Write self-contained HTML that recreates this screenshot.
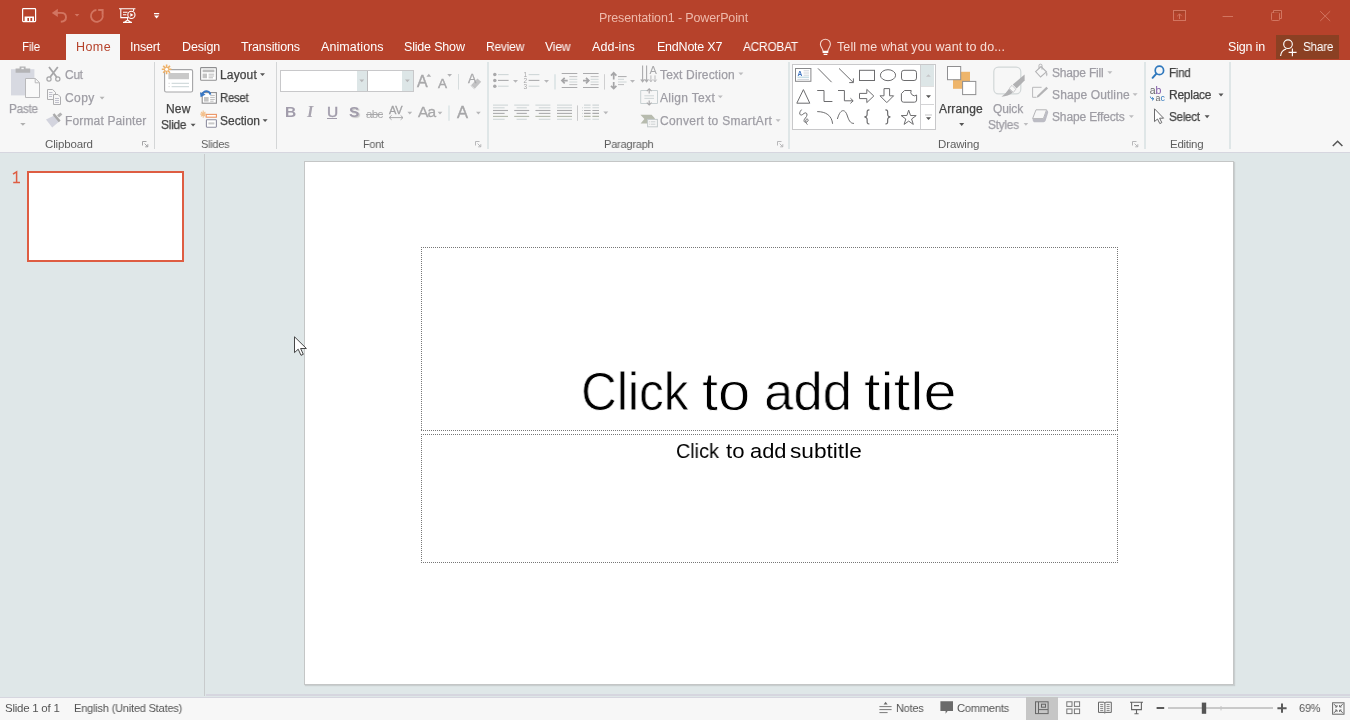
<!DOCTYPE html>
<html>
<head>
<meta charset="utf-8">
<title>Presentation1 - PowerPoint</title>
<style>
html,body{margin:0;padding:0;}
body{width:1350px;height:720px;overflow:hidden;position:relative;background:#dfe7e8;font-family:"Liberation Sans",sans-serif;font-size:12.5px;color:#444;}
.a{position:absolute;}
.t{position:absolute;white-space:nowrap;line-height:16px;height:16px;will-change:transform;}
svg{position:absolute;overflow:visible;will-change:transform;}
#titlebar{left:0;top:0;width:1350px;height:60px;background:#b6422b;}
#ribbon{left:0;top:60px;width:1350px;height:92px;background:#f7f7f7;}
#ribline{left:0;top:152px;width:1350px;height:1px;background:#d6d6df;}
#work{left:0;top:153px;width:1350px;height:544px;background:#dfe7e8;}
#status{left:0;top:697px;width:1350px;height:23px;background:#f7f7f7;border-top:1px solid #d6d6df;box-sizing:border-box;}
.tab{color:#fff;font-size:13px;top:39px;}
.gl{color:#555;font-size:11.5px;top:136px;}
.dis{color:#9a9a9a;}
.en{color:#3b3b3b;}
.sep{position:absolute;top:62px;width:1px;height:87px;background:#dadfe0;}
.ph{background:
 repeating-linear-gradient(90deg,#777 0 1px,transparent 1px 2px) 0 0/100% 1px no-repeat,
 repeating-linear-gradient(90deg,#777 0 1px,transparent 1px 2px) 0 100%/100% 1px no-repeat,
 repeating-linear-gradient(180deg,#777 0 1px,transparent 1px 2px) 0 0/1px 100% no-repeat,
 repeating-linear-gradient(180deg,#777 0 1px,transparent 1px 2px) 100% 0/1px 100% no-repeat;}
</style>
</head>
<body>
<!-- TITLE BAR -->
<div id="titlebar" class="a"></div>
<div class="a" style="left:66px;top:34px;width:54px;height:26px;background:#f7f7f7;"></div>
<div class="a" style="left:1276px;top:35px;width:63px;height:24px;background:#8b4023;"></div>
<!-- QAT + window controls -->
<svg style="left:0;top:0;" width="1350" height="60" viewBox="0 0 1350 60">
 <!-- save -->
 <g fill="none" stroke="#fff" stroke-width="1.2">
  <rect x="22.6" y="8.6" width="13" height="13" rx="0.8"/>
 </g>
 <path d="M24.6 16.6 H34 V21.4 H24.6 Z M27.4 18 V21.2 H29 V18 Z M30.4 18 V21.2 H32.2 V18 Z" fill="#fff" fill-rule="evenodd"/>
 <path d="M24.6 9 V15" stroke="#fff" stroke-width="0.01"/>
 <!-- undo -->
 <g fill="none" stroke="#d27561" stroke-width="1.9" stroke-linejoin="round">
  <path d="M54.4 12.9 H61 C64.4 12.9 66 15 66 17.2 C66 19.8 63.8 21.6 60.8 21.8"/>
  <!-- redo -->
  <path d="M96.4 10 A5.9 5.9 0 1 0 102.5 14.2" stroke-width="1.8"/>
 </g>
 <path d="M51.8 12.9 L57.8 8.8 V17 Z" fill="#d27561"/>
 <path d="M98.2 9 H103.6 V14.4 H101.6 V11 H98.2 Z" fill="#d27561"/>
 <path d="M74.6 14 H79.4 L77 16.6 Z" fill="#d27561"/>
 <!-- slideshow -->
 <g fill="none" stroke="#fff" stroke-width="1.1">
  <path d="M119 8.8 H135.4 M120.8 9 V17.6 H128.4 M127.6 17.8 V20.4 M124.4 22.3 L127.6 20 L130.8 22.3 M123 22.4 H132 M123 12.3 H127.6 M123 14.8 H126.4 M133.6 9 V11"/>
  <circle cx="131.4" cy="14.9" r="3.6" fill="#b6422b"/>
 </g>
 <path d="M130.3 13 L133.4 14.9 L130.3 16.8 Z" fill="#fff"/>
 <!-- customize -->
 <path d="M154 13 H159.2 V14.2 H154 Z M154 15.6 H159.2 L156.6 18.6 Z" fill="#fff"/>
 <!-- ribbon display -->
 <g fill="none" stroke="#d27560" stroke-width="1">
  <rect x="1173.5" y="10.5" width="12" height="10"/>
  <path d="M1179.5 19 V14 M1177.2 16.2 L1179.5 13.9 L1181.8 16.2"/>
  <path d="M1222.6 16.5 H1233"/>
  <rect x="1271.5" y="12.5" width="8" height="8" rx="0.8"/>
  <path d="M1273.5 12.3 V10.5 H1281.5 V18.5 H1279.8"/>
  <path d="M1320.2 11.2 L1330.2 21 M1330.2 11.2 L1320.2 21"/>
 </g>
 <rect x="1174" y="11" width="11" height="2.2" fill="#a84128"/>
 <rect x="1274" y="11" width="7" height="1.6" fill="#a84128"/>
 <!-- lightbulb -->
 <g fill="none" stroke="#f4d3ca" stroke-width="1.1">
  <path d="M823 51.2 C823 48 820.4 47.4 820.4 44.2 A5 5 0 0 1 830.4 44.2 C830.4 47.4 827.9 48 827.9 51.2"/>
 </g>
 <path d="M822.6 50.8 H828.3 V53 H822.6 Z M823.6 53.8 H827.4 V55 H823.6 Z" fill="#fff"/>
 <!-- share person -->
 <g fill="none" stroke="#fff" stroke-width="1.15">
  <circle cx="1288" cy="44.2" r="4.3"/>
  <path d="M1280.6 56 C1280.9 51.8 1283.6 49.8 1286.2 49"/>
  <path d="M1292.4 48.6 V56.2 M1288.6 52.4 H1296.6"/>
 </g>
</svg>
<!-- RIBBON -->
<div id="ribbon" class="a"></div>
<div id="ribline" class="a"></div>
<!-- RIBBON ICONS: clipboard + slides -->
<div class="sep" style="left:154px;background:#d4d6d7;"></div>
<div class="sep" style="left:276px;background:#d4d6d7;"></div>
<div class="sep" style="left:487px;width:2px;background:#dfe6e7;"></div>
<div class="sep" style="left:788px;width:2px;background:#dfe6e7;"></div>
<div class="sep" style="left:1144px;width:2px;background:#dfe6e7;"></div>
<div class="sep" style="left:1229px;width:2px;background:#dfe6e7;"></div>
<svg style="left:0;top:60px;" width="280" height="92" viewBox="0 60 280 92">
 <!-- paste -->
 <rect x="11" y="69.2" width="23.4" height="26.2" fill="#d7d9e1"/>
 <path d="M15.6 68.6 H19.6 V66.4 H25.6 V68.6 H30.2 V72.8 H15.6 Z M21.4 67.8 V69.2 H23.8 V67.8 Z" fill="#b4b4b6" fill-rule="evenodd"/>
 <path d="M25.5 78.5 H35.4 L39.5 82.6 V97.5 H25.5 Z" fill="#f9f9f9" stroke="#b9b9bb" stroke-width="1"/>
 <path d="M35.2 78.6 V82.8 H39.4" fill="none" stroke="#b9b9bb" stroke-width="1"/>
 <path d="M20.2 123 H25.6 L22.9 125.8 Z" fill="#b0b0b0"/>
 <!-- scissors -->
 <g fill="none" stroke="#a6a6a8" stroke-width="1.8">
  <path d="M49 67 L56.6 77 M57.8 67 L50.2 77"/>
  <circle cx="49" cy="79" r="2.1" stroke-width="1.2"/>
  <circle cx="57.8" cy="79" r="2.1" stroke-width="1.2"/>
 </g>
 <!-- copy -->
 <g fill="#f7f7f7" stroke="#aeaeb0" stroke-width="1">
  <path d="M47.5 89.5 H52.6 L55.5 92.4 V99.5 H47.5 Z"/>
  <path d="M53.5 94.5 H58 L60.5 97 V104.5 H53.5 Z"/>
 </g>
 <path d="M49 92.5 H52.5 M49 94.5 H52.5 M49 96.5 H52 M55 98.5 H59 M55 100.5 H59 M55 102.5 H59" stroke="#b9b9c6" stroke-width="0.9" fill="none"/>
 <!-- format painter -->
 <path d="M46 119.6 L54.2 115.4 L59.2 121.6 L52.2 127.6 Z" fill="#d3d4de"/>
 <path d="M52.6 114.8 L54.4 113.2 L60.6 120.6 L58.8 122.2 Z" fill="#aaaaab"/>
 <path d="M57 115.2 L60.4 112.4 L62.4 114.6 L59 117.6 Z" fill="#b2b2b3"/>
 <!-- clipboard launcher -->
 <path d="M142.5 145.5 V141.5 H146.5 M144.6 143.6 L147.6 146.6 M147.8 144.2 V146.8 H145.2" fill="none" stroke="#9a9a9c" stroke-width="0.9"/>
 <!-- copy arrow -->
 <path d="M99.6 96.8 H104.6 L102.1 99.4 Z" fill="#b5b5b5"/>
 <!-- NEW SLIDE -->
 <rect x="164.6" y="69.6" width="28" height="22.4" rx="1.6" fill="#fff" stroke="#a5a5a7" stroke-width="1.1"/>
 <rect x="168.4" y="73" width="20.6" height="6.2" fill="#c9c9c9"/>
 <path d="M171.6 83.3 H189 M171.6 86.6 H189" stroke="#d3dcdd" stroke-width="1.3"/>
 <path d="M168.6 83.3 H169.6 M168.6 86.6 H169.6" stroke="#c9c9c9" stroke-width="1"/>
 <g stroke="#eeb169" stroke-width="1.6" fill="none">
  <path d="M166.6 64.4 V74.2 M161.8 69.3 H171.4 M163.2 65.9 L170 72.7 M170 65.9 L163.2 72.7"/>
 </g>
 <circle cx="166.6" cy="69.3" r="1.5" fill="#fff"/>
 <path d="M190.6 123.8 H195.6 L193.1 126.6 Z" fill="#555"/>
 <!-- layout -->
 <rect x="200.6" y="67.6" width="15.8" height="12.6" rx="0.8" fill="#fff" stroke="#8e8e90" stroke-width="1.1"/>
 <rect x="202.6" y="69.6" width="11.8" height="2.6" fill="#bdbdbd"/>
 <rect x="202.6" y="73.6" width="4.4" height="4.6" fill="#c4c4c4"/>
 <path d="M208.6 74.2 H214.2 M208.6 76 H214.2 M208.6 77.8 H213" stroke="#b4b4b4" stroke-width="0.9"/>
 <path d="M260 73.2 H265 L262.5 76 Z" fill="#555"/>
 <!-- reset -->
 <rect x="202.2" y="92.6" width="14.2" height="10.6" fill="#fff" stroke="#8e8e90" stroke-width="1.1"/>
 <rect x="204" y="97" width="4.6" height="4.6" fill="#c4c4c4"/>
 <path d="M210.2 95.4 H214.8 M210.2 97.4 H214.8 M210.2 99.4 H214.8 M210.2 101.2 H213.6" stroke="#b4b4b4" stroke-width="0.9"/>
 <path d="M210.4 94.6 C209.6 90.4 204.2 89.6 202.4 94.2" fill="none" stroke="#3a78c4" stroke-width="1.9"/>
 <path d="M200 92.2 L205.6 94.6 L200.6 97.2 Z" fill="#3a78c4"/>
 <!-- section -->
 <rect x="206.2" y="114.4" width="10.2" height="2.8" fill="#fff" stroke="#ec9463" stroke-width="1.1"/>
 <rect x="206.4" y="119.8" width="10" height="7.4" rx="0.6" fill="#fff" stroke="#8e8ea0" stroke-width="1.1"/>
 <rect x="208.4" y="122.4" width="6" height="2" fill="#c9c9c9"/>
 <g stroke="#f3c08c" stroke-width="1.1"><path d="M203.2 110.4 V117.8 M200.2 114.1 H206.2 M201 111.9 L205.4 116.3 M205.4 111.9 L201 116.3"/></g>
 <path d="M262.6 119.2 H267.6 L265.1 122 Z" fill="#555"/>
</svg>
<!-- FONT GROUP -->
<div class="a" style="left:280px;top:70px;width:132px;height:20px;border:1px solid #c8c8ca;background:#fff;"></div>
<div class="a" style="left:357px;top:71px;width:10px;height:20px;background:#dde6e7;"></div>
<div class="a" style="left:367px;top:71px;width:1px;height:20px;background:#bcbcbe;"></div>
<div class="a" style="left:402px;top:71px;width:11px;height:20px;background:#dde6e7;"></div>
<svg style="left:276px;top:60px;" width="214" height="92" viewBox="276 60 214 92">
 <path d="M359.4 79.6 H364.2 L361.8 82.2 Z M405 79.6 H409.8 L407.4 82.2 Z" fill="#b7b7b9"/>
 <!-- grow / shrink tri -->
 <path d="M426.4 76.8 L428.8 73.8 L431.2 76.8 Z M447.2 74 H452 L449.6 76.8 Z" fill="#b2b2b4"/>
 <path d="M458.5 74 V89.6" stroke="#d6dcdd" stroke-width="1"/>
 <!-- eraser -->
 <path d="M471 85.2 L477.4 78.4 L481.2 81.8 L474.8 88.8 Z" fill="#c3c3c4"/>
 <path d="M470.6 85.6 L474.4 89.2" stroke="#dcdcdc" stroke-width="1"/>
 <!-- AV arrow -->
 <path d="M389.2 117.6 H403 M391.6 115.4 L389.2 117.6 L391.6 119.8 M400.6 115.4 L403 117.6 L400.6 119.8" fill="none" stroke="#a9a9ab" stroke-width="1"/>
 <path d="M407.4 111.8 H412.2 L409.8 114.6 Z M437.6 111.8 H442.4 L440 114.6 Z M476 111.8 H480.8 L478.4 114.6 Z" fill="#b7b7b9"/>
 <path d="M449 105.4 V120.8" stroke="#dde5e6" stroke-width="1.6"/>
 <!-- launcher -->
 <path d="M475.5 145.5 V141.5 H479.5 M477.6 143.6 L480.6 146.6 M480.8 144.2 V146.8 H478.2" fill="none" stroke="#b0b0b2" stroke-width="0.9"/>
</svg>
<div class="t" style="left:284.8px;top:102px;height:20px;line-height:20px;font-size:15.5px;font-weight:bold;color:#a19cab;">B</div>
<div class="t" style="left:307.4px;top:101.6px;height:20px;line-height:20px;font-size:16.5px;font-family:'Liberation Serif',serif;font-style:italic;font-weight:bold;color:#a9a5b0;">I</div>
<div class="t" style="left:326.6px;top:102px;height:20px;line-height:20px;font-size:15.5px;color:#a19cab;-webkit-text-stroke:0.5px #a19cab;">U</div>
<div class="a" style="left:327px;top:118px;width:10px;height:1px;background:#a19cab;"></div>
<div class="t" style="left:348.6px;top:102px;height:20px;line-height:20px;font-size:15.5px;font-weight:bold;color:#a19cab;text-shadow:1.2px 1.2px 1px #c9c9c9;">S</div>
<div class="t" style="left:365.6px;top:104px;height:20px;line-height:20px;font-size:11.5px;color:#a8a8aa;letter-spacing:-0.6px;">abc</div>
<div class="a" style="left:366px;top:114px;width:17px;height:1px;background:#a8a8aa;"></div>
<div class="t" style="left:388.6px;top:100.2px;height:20px;line-height:20px;font-size:11px;color:#a2a2a4;letter-spacing:-0.3px;-webkit-text-stroke:0.3px #a2a2a4;">AV</div>
<div class="t" style="left:417.6px;top:102.2px;height:20px;line-height:20px;font-size:15.5px;color:#a8a8aa;letter-spacing:-0.9px;-webkit-text-stroke:0.3px #a8a8aa;">Aa</div>
<div class="t" style="left:457.2px;top:102.2px;height:20px;line-height:20px;font-size:16.5px;color:#a6a6a8;-webkit-text-stroke:0.4px #a6a6a8;">A</div>
<div class="t" style="left:416.8px;top:72.4px;height:20px;line-height:20px;font-size:16px;color:#a8a8aa;-webkit-text-stroke:0.4px #a8a8aa;">A</div>
<div class="t" style="left:438.2px;top:73.8px;height:20px;line-height:20px;font-size:13.5px;color:#a8a8aa;-webkit-text-stroke:0.4px #a8a8aa;">A</div>
<div class="t" style="left:467.6px;top:69px;height:20px;line-height:20px;font-size:12.5px;color:#a8a8aa;-webkit-text-stroke:0.3px #a8a8aa;">A</div>
<!-- PARAGRAPH GROUP -->
<svg style="left:486px;top:60px;" width="304" height="92" viewBox="486 60 304 92">
<circle cx="494.8" cy="74.6" r="1.75" fill="#a9a9ab"/>
<path d="M498 74.6 H508.6" stroke="#cfd6d7" stroke-width="1.1"/>
<circle cx="494.8" cy="80.4" r="1.75" fill="#a9a9ab"/>
<path d="M498 80.4 H508.6" stroke="#ababad" stroke-width="1.1"/>
<circle cx="494.8" cy="86.2" r="1.75" fill="#a9a9ab"/>
<path d="M498 86.2 H508.6" stroke="#cfd6d7" stroke-width="1.1"/>
<text x="523.4" y="76.89999999999999" font-family="Liberation Sans" font-size="6.5" fill="#a4a4a6">1</text>
<path d="M528.6 74.6 H539.4" stroke="#cfd6d7" stroke-width="1.1"/>
<text x="523.4" y="82.7" font-family="Liberation Sans" font-size="6.5" fill="#a4a4a6">2</text>
<path d="M528.6 80.4 H539.4" stroke="#ababad" stroke-width="1.1"/>
<text x="523.4" y="88.5" font-family="Liberation Sans" font-size="6.5" fill="#a4a4a6">3</text>
<path d="M528.6 86.2 H539.4" stroke="#cfd6d7" stroke-width="1.1"/>
<path d="M513 80 H518 L515.5 82.7 Z" fill="#b7b7b9"/>
<path d="M544 80 H549 L546.5 82.7 Z" fill="#b7b7b9"/>
<path d="M630 80 H635 L632.5 82.7 Z" fill="#b7b7b9"/>
<path d="M603.3 111.6 H608.3 L605.8 114.3 Z" fill="#b7b7b9"/>
<path d="M738.4 72.6 H743.4 L740.9 75.3 Z" fill="#bdbdbf"/>
<path d="M717.8 95.6 H722.8 L720.3 98.3 Z" fill="#bdbdbf"/>
<path d="M775.6 119.2 H780.6 L778.1 121.9 Z" fill="#bdbdbf"/>
<path d="M555 74.2 V89.6" stroke="#dde5e6" stroke-width="1.8"/>
<path d="M604.5 74.2 V89.6" stroke="#cfcfd0" stroke-width="1"/>
<path d="M577.5 105.4 V120.8" stroke="#c9c9ca" stroke-width="1"/>
<path d="M561.7 73.5 H577.3000000000001 M561.7 87.5 H577.3000000000001" stroke="#ababad" stroke-width="1.1"/><path d="M569.3000000000001 76.6 H577.3000000000001" stroke="#c0c0c2" stroke-width="1"/><path d="M569.3000000000001 79.3 H577.3000000000001" stroke="#cfd6d7" stroke-width="1"/><path d="M569.3000000000001 82 H577.3000000000001" stroke="#cfd6d7" stroke-width="1"/><path d="M569.3000000000001 84.6 H577.3000000000001" stroke="#c0c0c2" stroke-width="1"/><path d="M562.1 80.6 H567.7 M564.7 77.8 L561.9000000000001 80.6 L564.7 83.4" fill="none" stroke="#a6a6a8" stroke-width="1.7"/>
<path d="M583 73.5 H598.6 M583 87.5 H598.6" stroke="#ababad" stroke-width="1.1"/><path d="M590.6 76.6 H598.6" stroke="#c0c0c2" stroke-width="1"/><path d="M590.6 79.3 H598.6" stroke="#cfd6d7" stroke-width="1"/><path d="M590.6 82 H598.6" stroke="#cfd6d7" stroke-width="1"/><path d="M590.6 84.6 H598.6" stroke="#c0c0c2" stroke-width="1"/><path d="M583 80.6 H588.6 M586 77.8 L588.8 80.6 L586 83.4" fill="none" stroke="#a6a6a8" stroke-width="1.7"/>
<path d="M613.7 72.8 V79.4 M613.7 82 V88.6 M611 75.6 L613.7 72.8 L616.4 75.6 M611 85.8 L613.7 88.6 L616.4 85.8" fill="none" stroke="#a6a6a8" stroke-width="1.7"/>
<path d="M618 76.6 H626.6" stroke="#ababad" stroke-width="1"/>
<path d="M618 79.3 H624" stroke="#cfd6d7" stroke-width="1"/>
<path d="M618 82 H626.6" stroke="#cfd6d7" stroke-width="1"/>
<path d="M618 84.6 H624" stroke="#bcbcbe" stroke-width="1"/>
<path d="M493.0 105.1 H508.0" stroke="#cfd6d7" stroke-width="1.1"/><path d="M493.0 107.8 H504.6" stroke="#cfd6d7" stroke-width="1.1"/><path d="M493.0 110.5 H508.0" stroke="#ababad" stroke-width="1.1"/><path d="M493.0 113.4 H504.6" stroke="#ababad" stroke-width="1.1"/><path d="M493.0 116.4 H508.0" stroke="#b4b9ab" stroke-width="1.1"/><path d="M493.0 119.3 H504.6" stroke="#cfd6d7" stroke-width="1.1"/>
<path d="M514.2 105.1 H529.2" stroke="#cfd6d7" stroke-width="1.1"/><path d="M516.6 107.8 H526.8" stroke="#cfd6d7" stroke-width="1.1"/><path d="M514.2 110.5 H529.2" stroke="#ababad" stroke-width="1.1"/><path d="M516.6 113.4 H526.8" stroke="#ababad" stroke-width="1.1"/><path d="M514.2 116.4 H529.2" stroke="#b4b9ab" stroke-width="1.1"/><path d="M516.6 119.3 H526.8" stroke="#cfd6d7" stroke-width="1.1"/>
<path d="M535.4 105.1 H550.4" stroke="#cfd6d7" stroke-width="1.1"/><path d="M538.8 107.8 H550.4" stroke="#cfd6d7" stroke-width="1.1"/><path d="M535.4 110.5 H550.4" stroke="#ababad" stroke-width="1.1"/><path d="M538.8 113.4 H550.4" stroke="#ababad" stroke-width="1.1"/><path d="M535.4 116.4 H550.4" stroke="#b4b9ab" stroke-width="1.1"/><path d="M538.8 119.3 H550.4" stroke="#cfd6d7" stroke-width="1.1"/>
<path d="M557.0 105.1 H572.0" stroke="#cfd6d7" stroke-width="1.1"/><path d="M557.0 107.8 H572.0" stroke="#cfd6d7" stroke-width="1.1"/><path d="M557.0 110.5 H572.0" stroke="#ababad" stroke-width="1.1"/><path d="M557.0 113.4 H572.0" stroke="#ababad" stroke-width="1.1"/><path d="M557.0 116.4 H572.0" stroke="#b4b9ab" stroke-width="1.1"/><path d="M557.0 119.3 H572.0" stroke="#cfd6d7" stroke-width="1.1"/>
<path d="M584 105.1 H590.6 M592.4 105.1 H599" stroke="#cfd6d7" stroke-width="1.1"/>
<path d="M584 107.8 H590.6 M592.4 107.8 H599" stroke="#cfd6d7" stroke-width="1.1"/>
<path d="M582 107.8 H583" stroke="#cfd6d7" stroke-width="1"/>
<path d="M584 110.5 H590.6 M592.4 110.5 H599" stroke="#ababad" stroke-width="1.1"/>
<path d="M582 110.5 H583" stroke="#cfd6d7" stroke-width="1"/>
<path d="M584 113.4 H590.6 M592.4 113.4 H599" stroke="#ababad" stroke-width="1.1"/>
<path d="M582 113.4 H583" stroke="#cfd6d7" stroke-width="1"/>
<path d="M584 116.4 H590.6 M592.4 116.4 H599" stroke="#b4b9ab" stroke-width="1.1"/>
<path d="M582 116.4 H583" stroke="#cfd6d7" stroke-width="1"/>
<path d="M584 119.3 H590.6 M592.4 119.3 H599" stroke="#cfd6d7" stroke-width="1.1"/>
<path d="M642.6 65.4 V81.6 M646.6 65.4 V81.6 M640.8 79.4 L642.6 81.8 L644.4 79.4 M644.8 79.4 L646.6 81.8 L648.4 79.4" fill="none" stroke="#ababad" stroke-width="1.1"/>
<path d="M650.9 75.4 V81.6 M655 75.4 V81.6 M649.3 79.6 L650.9 81.8 L652.5 79.6 M653.4 79.6 L655 81.8 L656.6 79.6" fill="none" stroke="#b3b3b5" stroke-width="0.9"/>
<text x="649.4" y="73.8" font-family="Liberation Sans" font-size="11" fill="#a8a8aa">A</text>
<path d="M647 90.5 H640.7 V103.5 H647 M651.4 90.5 H657.5 V103.5 H651.4" fill="none" stroke="#c8d0d2" stroke-width="1"/>
<path d="M649.2 88.8 V93.4 M646.8 91.2 L649.2 88.8 L651.6 91.2 M649.2 100.4 V105 M646.8 102.6 L649.2 105 L651.6 102.6" fill="none" stroke="#ababad" stroke-width="1.2"/>
<path d="M644.4 95.8 H654 M644.4 98.4 H654" stroke="#cfd6d7" stroke-width="1"/>
<path d="M640.4 114.8 H651.6 L655 118.6 L653 121.2 H648 V123.4 H640.6 L644.4 119 Z" fill="#b7bbae"/>
<rect x="647.6" y="119.4" width="9.8" height="7.4" fill="#f7f7f7" stroke="#c3c9ca" stroke-width="1"/>
<path d="M651 121.8 H655.4 M651 124.2 H655.4" stroke="#c6cccd" stroke-width="0.9"/><path d="M649.4 121.8 H650.2 M649.4 124.2 H650.2" stroke="#b9b9b9" stroke-width="0.9"/>
<path d="M777.5 145.5 V141.5 H781.5 M779.6 143.6 L782.6 146.6 M782.8 144.2 V146.8 H780.2" fill="none" stroke="#b0b0b2" stroke-width="0.9"/>
</svg>
<!-- DRAWING + EDITING -->
<div class="a" style="left:792px;top:64px;width:142px;height:64px;border:1px solid #c8c8ca;background:#fff;"></div>
<div class="a" style="left:921px;top:65px;width:13px;height:21px;background:#dde6e7;"></div>
<div class="a" style="left:920px;top:65px;width:1px;height:64px;background:#d0d0d2;"></div>
<div class="a" style="left:921px;top:86px;width:13px;height:1px;background:#e1e1e1;"></div>
<div class="a" style="left:921px;top:104px;width:13px;height:1px;background:#d4d4d6;"></div>
<svg style="left:788px;top:60px;" width="562" height="92" viewBox="788 60 562 92">
<g fill="none" stroke="#6c6c6e" stroke-width="1" stroke-linejoin="miter">
<rect x="795.5" y="68.5" width="15.4" height="12.8" stroke="#88888a"/>
<path d="M818 68.4 L831.6 82.2"/>
<path d="M839 68.4 L853.2 82.4 M853.4 78.4 V82.6 H849.2"/>
<rect x="859.5" y="70.3" width="15" height="10.2"/>
<ellipse cx="888" cy="75.2" rx="7.6" ry="5.5"/>
<rect x="901.5" y="70.3" width="15" height="10.2" rx="2.4"/>
<path d="M803.4 89.6 L809.8 103.2 H796.8 Z"/>
<path d="M817.2 90.5 H824 V101.5 H832.4"/>
<path d="M838 90.5 H844.4 V100.8 H853 M850.4 98.2 L853.2 100.8 L850.4 103.4"/>
<path d="M859.5 93.4 H866.8 V89.4 L873.8 96 L866.8 102.6 V98.6 H859.5 Z"/>
<path d="M884 88.6 H889.6 V95.8 H893.6 L886.8 102.6 L880 95.8 H884 Z"/>
<path d="M904.6 90.5 H911.2 A3.6 3.6 0 0 0 916.6 95 V100 Q916.6 102.2 914.4 102.2 H903.6 Q901.4 102.2 901.4 100 V93.6 Z"/>
<path d="M801.6 109.6 C797.8 113.6 800.4 116.6 803 114.2 C806.6 110.8 808.6 114.6 805.4 118 C802.4 121 804.8 123.8 807.6 121.4 C809.4 119.6 806.6 117.8 805.8 120.2 C805.4 121.8 806.4 123.6 807.4 124.6"/>
<path d="M817.2 111.6 C826 111.6 831.8 115.6 832.6 123.8"/>
<path d="M837.4 119 C840.4 108.2 845.2 108.6 847.4 116 C849.4 122.4 851.4 123.4 854 123.4"/>
<path d="M869.4 109.8 C866 109.8 867.6 113 867 115.2 C866.6 116.4 865.6 116.8 864.4 116.9 C865.6 117 866.6 117.4 867 118.6 C867.6 120.8 866 124 869.4 124" stroke-width="1.2"/>
<path d="M885.4 109.8 C888.8 109.8 887.2 113 887.8 115.2 C888.2 116.4 889.2 116.8 890.4 116.9 C889.2 117 888.2 117.4 887.8 118.6 C887.2 120.8 888.8 124 885.4 124" stroke-width="1.2"/>
<path d="M908.7 110.1 L910.5 115.5 L916.2 115.6 L911.6 119.0 L913.3 124.4 L908.7 121.1 L904.1 124.4 L905.8 119.0 L901.2 115.6 L906.9 115.5 Z"/>
</g>
<text x="797.6" y="75.6" font-family="Liberation Sans" font-size="6.6" font-weight="bold" fill="#3f74c0">A</text>
<path d="M803.6 70.8 H809 M803.6 73 H809 M803.6 75.2 H809 M797.4 79.4 H809" stroke="#c9cfd6" stroke-width="0.9"/><path d="M797.4 77.2 H809" stroke="#bcd6e0" stroke-width="1.2"/>
<path d="M926 76.8 L928.4 74.2 L930.8 76.8 Z" fill="#c6c6c8"/>
<path d="M926 95.2 H931 L928.5 98 Z" fill="#555"/>
<path d="M925 115 H932" stroke="#c9c9cb" stroke-width="1.1"/><path d="M926 117.3 H931 L928.5 120.1 Z" fill="#555"/>
<rect x="953" y="71.8" width="17" height="17" fill="#eeb56b"/>
<rect x="947.5" y="66.5" width="13.2" height="13.2" fill="#fff" stroke="#8f8f91" stroke-width="1"/>
<rect x="962.6" y="81.4" width="13.2" height="13.2" fill="#fff" stroke="#8f8f91" stroke-width="1"/>
<path d="M959.2 123 H964.2 L961.7 125.9 Z" fill="#555"/>
<rect x="993.8" y="67.2" width="27" height="26.6" rx="4.6" fill="#f7f7f7" stroke="#d2d7d8" stroke-width="1.2"/>
<path d="M1024.6 74.6 V80.6 L1016.6 88.4 L1012.8 84.6 Z" fill="#b1b1b3"/>
<path d="M1012 85.4 L1015.8 89.2 L1013.4 92.4 L1009.2 88.2 Z" fill="#f7f7f7" stroke="#c4c4c6" stroke-width="0.9"/>
<path d="M1009 88.8 L1012.8 92.6 C1010 95.4 1006 96.6 1001.4 96.8 C1004.6 94.6 1006.6 92 1009 88.8 Z" fill="#b1b1b3"/>
<path d="M1023.6 123 H1028.2 L1025.9 125.8 Z" fill="#bdbdbf"/>
<path d="M1035.6 71.6 L1041 66.6 L1046.4 71.8 L1040.6 77 Z" fill="none" stroke="#b3b3b5" stroke-width="1.1"/>
<path d="M1039 68.6 V65.4 Q1039 64.2 1040.2 64.2 H1040.8 Q1042 64.2 1042 65.4 V69.6" fill="none" stroke="#b3b3b5" stroke-width="1"/>
<path d="M1046.4 71.4 C1047.8 72.8 1047.8 75 1046.8 76.4 C1045.6 75 1045.4 73 1046.4 71.4 Z" fill="#bdbdbf"/>
<path d="M1041.6 87.3 H1032.6 V97.3 H1036.4" fill="none" stroke="#b9b9bb" stroke-width="1"/>
<path d="M1046.4 86.8 L1048 88.4 L1038.8 97 L1036.6 97.8 L1037.4 95.6 Z" fill="#b3b3b5"/>
<path d="M1036 109.8 H1046.6 L1043.4 118.6 H1032.6 Z" fill="#f7f7f7" stroke="#b5b5b7" stroke-width="1"/>
<path d="M1046.8 110 Q1048.4 110.6 1048.2 112.6 L1045.6 120.8 Q1045 122.2 1043.6 122.2 H1034 Q1032.4 121.4 1032.6 118.8 H1043.4 Z" fill="#bcbcc4"/>
<path d="M1107.4 71.2 H1112.4 L1109.9 74.0 Z" fill="#bdbdbf"/>
<path d="M1132.6 93.2 H1137.6 L1135.1 96.0 Z" fill="#bdbdbf"/>
<path d="M1128.9 115.2 H1133.9 L1131.4 118.0 Z" fill="#bdbdbf"/>
<path d="M1132.5 145.5 V141.5 H1136.5 M1134.6 143.6 L1137.6 146.6 M1137.8 144.2 V146.8 H1135.2" fill="none" stroke="#b0b0b2" stroke-width="0.9"/>
<circle cx="1159.4" cy="70.4" r="4.2" fill="none" stroke="#2f78bd" stroke-width="1.7"/>
<path d="M1156.4 73.6 L1152.6 77.8" stroke="#2f78bd" stroke-width="2" stroke-linecap="round"/>
<text x="1149.8" y="94" font-family="Liberation Sans" font-size="10.5" fill="#68686a">a</text>
<text x="1155.6" y="94" font-family="Liberation Sans" font-size="10.5" fill="#7d55a4">b</text>
<text x="1155.6" y="100.8" font-family="Liberation Sans" font-size="8.8" fill="#68686a">a</text>
<text x="1160.6" y="100.8" font-family="Liberation Sans" font-size="8.8" fill="#2f78bd">c</text>
<path d="M1150.4 96.6 C1150.6 98.4 1151.6 98.8 1153.4 98.8 M1152 97.4 L1153.8 98.8 L1152 100.4" fill="none" stroke="#2f78bd" stroke-width="1"/>
<path d="M1154.5 108.8 V121.6 L1157.5 119 L1159.8 123.6 L1161.8 122.6 L1159.6 118.2 H1163.6 Z" fill="#fff" stroke="#6a6a6c" stroke-width="1" stroke-linejoin="round"/>
<path d="M1218.5 93.6 H1223.5 L1221 96.6 Z M1204.6 115.2 H1209.6 L1207.1 118.2 Z" fill="#555"/>
<path d="M1332.8 146 L1337.6 141.2 L1342.4 146" fill="none" stroke="#555" stroke-width="1.5"/>
</svg>

<!-- WORKSPACE -->
<div id="work" class="a"></div>

<div class="a" style="left:204px;top:154px;width:1px;height:542px;background:#c8cbcc;"></div>
<div class="a" style="left:206px;top:694px;width:1144px;height:2px;background:#d6d6df;"></div>
<!-- thumbnail -->
<svg style="left:12.4px;top:171px;" width="9" height="13" viewBox="0 0 9 13"><path d="M1 3.2 L4.6 0.9 V11.2 M1.2 11.4 H8" fill="none" stroke="#de5d42" stroke-width="1.5"/></svg>
<div class="a" style="left:27px;top:171px;width:153px;height:87px;border:2px solid #de5d42;background:#fff;"></div>
<!-- slide -->
<div class="a" style="left:304px;top:161px;width:928px;height:522px;border:1px solid #c4c6c6;background:#fff;box-shadow:1px 1px 1px rgba(120,120,120,.22);"></div>
<div class="a ph" style="left:421px;top:247px;width:697px;height:184px;"></div>
<div class="a ph" style="left:421px;top:434px;width:697px;height:129px;"></div>
<div class="t" style="left:581.1px;top:361px;height:60px;line-height:60px;font-size:54px;color:#000;transform-origin:0 0;-webkit-text-stroke:0.8px #fff;transform:scaleX(0.920);">Click</div>
<div class="t" style="left:701.6px;top:361px;height:60px;line-height:60px;font-size:54px;color:#000;transform-origin:0 0;-webkit-text-stroke:0.8px #fff;transform:scaleX(1.072);">to</div>
<div class="t" style="left:763.6px;top:361px;height:60px;line-height:60px;font-size:54px;color:#000;transform-origin:0 0;-webkit-text-stroke:0.8px #fff;transform:scaleX(0.977);">add</div>
<div class="t" style="left:864.0px;top:361px;height:60px;line-height:60px;font-size:54px;color:#000;transform-origin:0 0;-webkit-text-stroke:0.8px #fff;transform:scaleX(1.101);">title</div>
<div class="t" style="left:676.4px;top:439px;height:24px;line-height:24px;font-size:20.5px;color:#000;transform-origin:0 0;transform:scaleX(0.965);">Click</div>
<div class="t" style="left:726.3px;top:439px;height:24px;line-height:24px;font-size:20.5px;color:#000;transform-origin:0 0;transform:scaleX(1.081);">to</div>
<div class="t" style="left:749.6px;top:439px;height:24px;line-height:24px;font-size:20.5px;color:#000;transform-origin:0 0;transform:scaleX(1.066);">add</div>
<div class="t" style="left:790.4px;top:439px;height:24px;line-height:24px;font-size:20.5px;color:#000;transform-origin:0 0;transform:scaleX(1.105);">subtitle</div>
<!-- cursor -->
<svg style="left:294px;top:336px;" width="14" height="21" viewBox="0 0 14 21"><path d="M0.5 0.8 V16.6 L4.2 13.2 L7 19.3 L9.3 18.3 L6.6 12.5 H12.4 Z" fill="#fff" stroke="#333" stroke-width="0.9" stroke-linejoin="round"/></svg>
<!--WORKCONTENT-->
<!-- STATUS -->
<div id="status" class="a"></div>
<div class="a" style="left:1026px;top:697px;width:32px;height:23px;background:#c6c6c6;"></div>
<svg style="left:870px;top:697px;" width="480" height="23" viewBox="870 697 480 23">
 <!-- notes -->
 <path d="M883.6 704.4 L885.6 701.8 L887.6 704.4 Z" fill="#6a6a6a"/>
 <path d="M879.4 706.6 H891.6 M879.4 709.6 H891.6 M879.4 712.6 H887.6" stroke="#7a7a7a" stroke-width="1"/>
 <!-- comments -->
 <path d="M940.4 701.2 H953 V711 H947.6 L945.6 713.8 V711 H940.4 Z" fill="#6b6b6b"/>
 <!-- normal view -->
 <g fill="none" stroke="#666" stroke-width="1">
  <rect x="1035.5" y="701.8" width="12.6" height="11.8"/>
  <path d="M1038.5 702 V713.4 M1038.6 709.6 H1048"/>
  <rect x="1041.5" y="704.2" width="4" height="3"/>
 </g>
 <!-- sorter -->
 <g fill="none" stroke="#777" stroke-width="1">
  <rect x="1066.8" y="701.8" width="5.2" height="4.6"/><rect x="1074.4" y="701.8" width="5.2" height="4.6"/>
  <rect x="1066.8" y="709" width="5.2" height="4.6"/><rect x="1074.4" y="709" width="5.2" height="4.6"/>
 </g>
 <!-- reading -->
 <g fill="none" stroke="#666" stroke-width="1">
  <path d="M1098.5 702.2 H1104 L1104.9 703 L1105.8 702.2 H1111.3 V712.4 H1105.8 L1104.9 713.2 L1104 712.4 H1098.5 Z M1104.9 703 V713"/>
  <path d="M1100.2 704.6 H1103.2 M1100.2 706.6 H1103.2 M1100.2 708.6 H1103.2 M1100.2 710.6 H1103.2 M1106.6 704.6 H1109.6 M1106.6 706.6 H1109.6 M1106.6 708.6 H1109.6 M1106.6 710.6 H1109.6" stroke-width="0.8"/>
 </g>
 <!-- slideshow -->
 <g fill="none" stroke="#666" stroke-width="1.1">
  <path d="M1130 702.2 H1143 M1131.6 702.4 V709.6 H1141.4 V702.4 M1134 705.6 H1139 M1136.5 709.8 V713.6 M1134.4 713.8 H1138.6"/>
 </g>
 <!-- zoom -->
 <path d="M1156.6 708 H1164.2" stroke="#5a5a5a" stroke-width="2"/>
 <path d="M1168 708 H1273" stroke="#9c9c9c" stroke-width="1"/>
 <path d="M1221 706 V710.4" stroke="#c4c4c4" stroke-width="1"/>
 <rect x="1201.8" y="702.6" width="4.4" height="11.2" fill="#555"/>
 <path d="M1277.4 708.2 H1286.6 M1282 703.6 V712.8" stroke="#5a5a5a" stroke-width="2"/>
 <!-- fit -->
 <rect x="1332.6" y="702.8" width="11.4" height="11.4" fill="none" stroke="#666" stroke-width="1"/>
 <path d="M1334 704.2 L1336.6 706.8 M1342.6 704.2 L1340 706.8 M1334 712.8 L1336.6 710.2 M1342.6 712.8 L1340 710.2" stroke="#555" stroke-width="1"/>
 <path d="M1335 707 H1337 V705 M1341.6 707 H1339.6 V705 M1335 710 H1337 V712 M1341.6 710 H1339.6 V712" fill="none" stroke="#666" stroke-width="0.9"/>
</svg>
<!-- LABELS -->
<div class="t" style="left:599.0px;top:10.1px;font-size:12.5px;color:#eeb9aa;letter-spacing:-0.12px;">Presentation1 - PowerPoint</div>
<div class="t" style="left:22.0px;top:39.4px;font-size:12.5px;color:#fff;letter-spacing:-0.25px;transform:scaleX(0.935);transform-origin:0 0;">File</div>
<div class="t" style="left:75.7px;top:39.4px;font-size:12.5px;color:#b6422b;letter-spacing:0.43px;">Home</div>
<div class="t" style="left:130.0px;top:39.4px;font-size:12.5px;color:#fff;letter-spacing:-0.20px;">Insert</div>
<div class="t" style="left:181.7px;top:39.4px;font-size:12.5px;color:#fff;letter-spacing:-0.14px;">Design</div>
<div class="t" style="left:240.7px;top:39.4px;font-size:12.5px;color:#fff;letter-spacing:-0.17px;">Transitions</div>
<div class="t" style="left:320.7px;top:39.4px;font-size:12.5px;color:#fff;letter-spacing:0.07px;">Animations</div>
<div class="t" style="left:404.3px;top:39.4px;font-size:12.5px;color:#fff;letter-spacing:-0.18px;">Slide Show</div>
<div class="t" style="left:486.0px;top:39.4px;font-size:12.5px;color:#fff;letter-spacing:-0.25px;transform:scaleX(0.964);transform-origin:0 0;">Review</div>
<div class="t" style="left:545.0px;top:39.4px;font-size:12.5px;color:#fff;letter-spacing:-0.25px;transform:scaleX(0.979);transform-origin:0 0;">View</div>
<div class="t" style="left:591.7px;top:39.4px;font-size:12.5px;color:#fff;letter-spacing:0.05px;">Add-ins</div>
<div class="t" style="left:656.7px;top:39.4px;font-size:12.5px;color:#fff;letter-spacing:-0.22px;">EndNote X7</div>
<div class="t" style="left:743.3px;top:39.4px;font-size:12.5px;color:#fff;letter-spacing:-0.25px;transform:scaleX(0.952);transform-origin:0 0;">ACROBAT</div>
<div class="t" style="left:836.7px;top:39.4px;font-size:12.5px;color:#f7ddd6;letter-spacing:0.11px;">Tell me what you want to do...</div>
<div class="t" style="left:1227.6px;top:39.4px;font-size:12.5px;color:#fff;letter-spacing:-0.18px;">Sign in</div>
<div class="t" style="left:1303.0px;top:39.4px;font-size:12.5px;color:#fff;letter-spacing:-0.25px;transform:scaleX(0.938);transform-origin:0 0;">Share</div>
<div class="t" style="left:9.0px;top:100.5px;font-size:12px;color:#9e9da4;letter-spacing:-0.25px;transform:scaleX(0.977);transform-origin:0 0;-webkit-text-stroke:0.25px #9e9da4;">Paste</div>
<div class="t" style="left:65.0px;top:66.8px;font-size:12px;color:#9e9da4;letter-spacing:-0.25px;transform:scaleX(0.989);transform-origin:0 0;-webkit-text-stroke:0.25px #9e9da4;">Cut</div>
<div class="t" style="left:65.0px;top:89.5px;font-size:12px;color:#9e9da4;letter-spacing:0.43px;-webkit-text-stroke:0.25px #9e9da4;">Copy</div>
<div class="t" style="left:65.0px;top:112.8px;font-size:12px;color:#9e9da4;letter-spacing:0.15px;-webkit-text-stroke:0.25px #9e9da4;">Format Painter</div>
<div class="t" style="left:45.0px;top:136.0px;font-size:11.5px;color:#5e5e5e;letter-spacing:-0.16px;">Clipboard</div>
<div class="t" style="left:165.7px;top:100.5px;font-size:12px;color:#444;letter-spacing:0.15px;-webkit-text-stroke:0.25px #444;">New</div>
<div class="t" style="left:161.0px;top:117.1px;font-size:12px;color:#444;letter-spacing:-0.25px;transform:scaleX(0.988);transform-origin:0 0;-webkit-text-stroke:0.25px #444;">Slide</div>
<div class="t" style="left:220.0px;top:66.8px;font-size:12px;color:#444;letter-spacing:0.14px;-webkit-text-stroke:0.25px #444;">Layout</div>
<div class="t" style="left:220.0px;top:89.5px;font-size:12px;color:#444;letter-spacing:-0.25px;transform:scaleX(0.945);transform-origin:0 0;-webkit-text-stroke:0.25px #444;">Reset</div>
<div class="t" style="left:220.0px;top:112.8px;font-size:12px;color:#444;letter-spacing:0.00px;-webkit-text-stroke:0.25px #444;">Section</div>
<div class="t" style="left:201.0px;top:136.0px;font-size:11.5px;color:#5e5e5e;letter-spacing:-0.25px;transform:scaleX(0.951);transform-origin:0 0;">Slides</div>
<div class="t" style="left:363.3px;top:136.0px;font-size:11.5px;color:#5e5e5e;letter-spacing:-0.25px;transform:scaleX(0.944);transform-origin:0 0;">Font</div>
<div class="t" style="left:660.0px;top:66.8px;font-size:12px;color:#9e9da4;letter-spacing:0.15px;-webkit-text-stroke:0.25px #9e9da4;">Text Direction</div>
<div class="t" style="left:660.0px;top:89.5px;font-size:12px;color:#9e9da4;letter-spacing:0.33px;-webkit-text-stroke:0.25px #9e9da4;">Align Text</div>
<div class="t" style="left:660.0px;top:112.8px;font-size:12px;color:#9e9da4;letter-spacing:0.32px;-webkit-text-stroke:0.25px #9e9da4;">Convert to SmartArt</div>
<div class="t" style="left:604.0px;top:136.0px;font-size:11.5px;color:#5e5e5e;letter-spacing:-0.25px;transform:scaleX(0.962);transform-origin:0 0;">Paragraph</div>
<div class="t" style="left:939.3px;top:100.5px;font-size:12px;color:#444;letter-spacing:0.17px;-webkit-text-stroke:0.25px #444;">Arrange</div>
<div class="t" style="left:992.7px;top:100.5px;font-size:12px;color:#9e9da4;letter-spacing:-0.10px;-webkit-text-stroke:0.25px #9e9da4;">Quick</div>
<div class="t" style="left:987.7px;top:117.1px;font-size:12px;color:#9e9da4;letter-spacing:-0.25px;transform:scaleX(0.986);transform-origin:0 0;-webkit-text-stroke:0.25px #9e9da4;">Styles</div>
<div class="t" style="left:1051.7px;top:65.1px;font-size:12px;color:#9e9da4;letter-spacing:-0.19px;-webkit-text-stroke:0.25px #9e9da4;">Shape Fill</div>
<div class="t" style="left:1051.7px;top:87.1px;font-size:12px;color:#9e9da4;letter-spacing:0.13px;-webkit-text-stroke:0.25px #9e9da4;">Shape Outline</div>
<div class="t" style="left:1051.7px;top:108.8px;font-size:12px;color:#9e9da4;letter-spacing:-0.14px;-webkit-text-stroke:0.25px #9e9da4;">Shape Effects</div>
<div class="t" style="left:937.7px;top:136.0px;font-size:11.5px;color:#5e5e5e;letter-spacing:-0.12px;">Drawing</div>
<div class="t" style="left:1169.3px;top:65.1px;font-size:12px;color:#444;letter-spacing:-0.25px;transform:scaleX(0.963);transform-origin:0 0;-webkit-text-stroke:0.25px #444;">Find</div>
<div class="t" style="left:1169.3px;top:87.1px;font-size:12px;color:#444;letter-spacing:-0.25px;transform:scaleX(0.998);transform-origin:0 0;-webkit-text-stroke:0.25px #444;">Replace</div>
<div class="t" style="left:1169.3px;top:108.8px;font-size:12px;color:#444;letter-spacing:-0.25px;transform:scaleX(0.968);transform-origin:0 0;-webkit-text-stroke:0.25px #444;">Select</div>
<div class="t" style="left:1170.0px;top:136.0px;font-size:11.5px;color:#5e5e5e;letter-spacing:-0.25px;transform:scaleX(0.994);transform-origin:0 0;">Editing</div>
<div class="t" style="left:5.0px;top:700.3px;font-size:11.5px;color:#555;letter-spacing:-0.25px;transform:scaleX(0.995);transform-origin:0 0;">Slide 1 of 1</div>
<div class="t" style="left:74.0px;top:700.3px;font-size:11.5px;color:#555;letter-spacing:-0.25px;transform:scaleX(0.966);transform-origin:0 0;">English (United States)</div>
<div class="t" style="left:896.3px;top:700.3px;font-size:11.5px;color:#555;letter-spacing:-0.25px;transform:scaleX(0.955);transform-origin:0 0;">Notes</div>
<div class="t" style="left:957.4px;top:700.3px;font-size:11.5px;color:#555;letter-spacing:-0.25px;transform:scaleX(0.970);transform-origin:0 0;">Comments</div>
<div class="t" style="left:1298.9px;top:700.3px;font-size:11.5px;color:#555;letter-spacing:-0.25px;transform:scaleX(0.956);transform-origin:0 0;">69%</div>

</body>
</html>
